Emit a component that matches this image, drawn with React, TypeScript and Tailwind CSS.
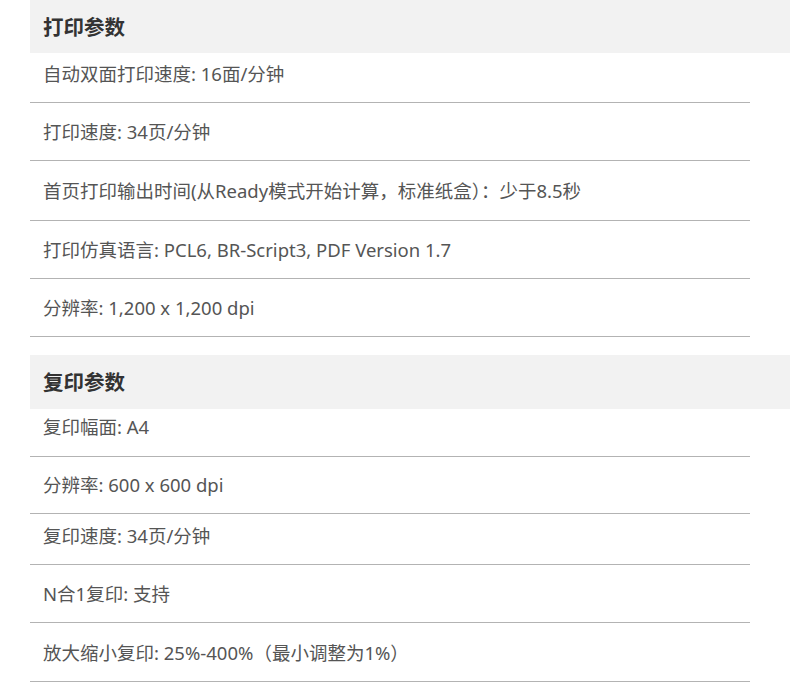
const sections = [
  {
    title: "打印参数",
    head: "h-[53px]",
    gap: "",
    rows: [
      { text: "自动双面打印速度: 16面/分钟", cls: "h-[50px] pt-[9px]" },
      { text: "打印速度: 34页/分钟", cls: "h-[58px] pt-[17px]" },
      {
        text: "首页打印输出时间(从Ready模式开始计算，标准纸盒）：少于8.5秒",
        cls: "h-[60px] pt-[18px]",
      },
      { text: "打印仿真语言: PCL6, BR-Script3, PDF Version 1.7", cls: "h-[58px] pt-[17px]" },
      { text: "分辨率: 1,200 x 1,200 dpi", cls: "h-[58px] pt-[17px]" },
    ],
  },
  {
    title: "复印参数",
    head: "h-[54px]",
    gap: "mt-[18px]",
    rows: [
      { text: "复印幅面: A4", cls: "h-[48px] pt-[6px]" },
      { text: "分辨率: 600 x 600 dpi", cls: "h-[57px] pt-[16px]" },
      { text: "复印速度: 34页/分钟", cls: "h-[51px] pt-[10px]" },
      { text: "N合1复印: 支持", cls: "h-[58px] pt-[17px]" },
      { text: "放大缩小复印: 25%-400%（最小调整为1%）", cls: "h-[59px] pt-[18px]" },
    ],
  },
];

export default function App() {
  return (
    <div className="min-h-[699px] w-[790px] overflow-hidden bg-white pl-[30px] font-['Noto_Sans','Noto_Sans_CJK_SC',sans-serif]">
      {sections.map((sec) => (
        <div key={sec.title} className={sec.gap}>
          {/* section header */}
          <div className={`flex items-center bg-[#f2f2f2] pl-[13px] ${sec.head}`}>
            <h2 className="text-[20.5px] font-bold leading-6 text-[#333]">{sec.title}</h2>
          </div>
          <div className="w-[720px]">
            {sec.rows.map((row) => (
              <div
                key={row.text}
                className={`border-b border-[#b3b3b3] pl-[13px] text-[18.5px] leading-6 text-[#555] ${row.cls}`}
              >
                {row.text}
              </div>
            ))}
          </div>
        </div>
      ))}
    </div>
  );
}
